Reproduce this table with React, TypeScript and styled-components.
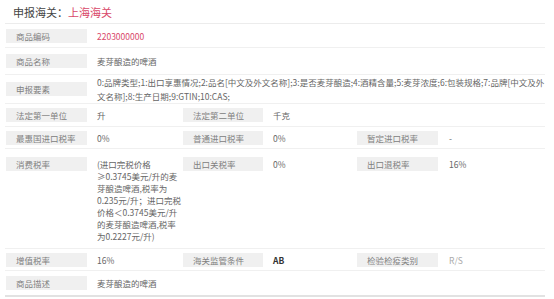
import styled, { createGlobalStyle } from "styled-components";

const GlobalStyle = createGlobalStyle`
  html, body {
    margin: 0;
    padding: 0;
    background: #fff;
  }
  body {
    font-family: "Noto Sans CJK SC", "Noto Sans", sans-serif;
  }
`;

type Cell = { label: string; value: string; strong?: boolean; faint?: boolean };

type RowData = {
  h: number;
  top?: boolean;
  cells: Cell[];
  pink?: boolean;
  lh?: number;
};

const ROWS: RowData[] = [
  { h: 24, pink: true, cells: [{ label: "商品编码", value: "2203000000" }] },
  { h: 27, cells: [{ label: "商品名称", value: "麦芽酿造的啤酒" }] },
  {
    h: 27,
    lh: 14,
    cells: [
      {
        label: "申报要素",
        value:
          "0:品牌类型;1:出口享惠情况;2:品名[中文及外文名称];3:是否麦芽酿造;4:酒精含量;5:麦芽浓度;6:包装规格;7:品牌[中文及外\n文名称];8:生产日期;9:GTIN;10:CAS;",
      },
    ],
  },
  {
    h: 23,
    cells: [
      { label: "法定第一单位", value: "升" },
      { label: "法定第二单位", value: "千克" },
    ],
  },
  {
    h: 22,
    cells: [
      { label: "最惠国进口税率", value: "0%" },
      { label: "普通进口税率", value: "0%" },
      { label: "暂定进口税率", value: "-" },
    ],
  },
  {
    h: 100,
    top: true,
    lh: 12,
    cells: [
      {
        label: "消费税率",
        value:
          "(进口完税价格\n≥0.3745美元/升的麦\n芽酿造啤酒,税率为\n0.235元/升；进口完税\n价格＜0.3745美元/升\n的麦芽酿造啤酒,税率\n为0.2227元/升)",
      },
      { label: "出口关税率", value: "0%" },
      { label: "出口退税率", value: "16%" },
    ],
  },
  {
    h: 22,
    cells: [
      { label: "增值税率", value: "16%" },
      { label: "海关监管条件", value: "AB", strong: true },
      { label: "检验检疫类别", value: "R/S", faint: true },
    ],
  },
  { h: 26, cells: [{ label: "商品描述", value: "麦芽酿造的啤酒" }] },
];

const App = () => {
  return (
    <>
      <GlobalStyle />
      <Wrapper>
        <Header>
          申报海关：<Port>上海海关</Port>
        </Header>
        <Table>
          {ROWS.map((row, i) => (
            <Row key={i} $h={row.h} $top={row.top} $last={i === ROWS.length - 1}>
              {row.cells.map((c, j) => (
                <Pair key={c.label}>
                  <Label $w={j === 1 ? 80 : 81}>{c.label}</Label>
                  <Value
                    $w={j === 0 && row.cells.length > 1 ? 96 : j === 1 ? 94 : undefined}
                    $pad={j === 2 ? 11 : 10}
                    $lh={row.lh}
                    $pink={row.pink}
                    $strong={c.strong}
                    $faint={c.faint}
                  >
                    {c.value}
                  </Value>
                </Pair>
              ))}
            </Row>
          ))}
        </Table>
      </Wrapper>
    </>
  );
};

const Wrapper = styled.div`
  width: 540px;
  margin-left: 5px;
  color: #666;
  font-size: 8.5px;
`;

const Header = styled.div`
  height: 24px;
  box-sizing: border-box;
  border-bottom: 1px solid #ececec;
  padding-left: 8px;
  padding-top: 5px;
  font-size: 11px;
  line-height: 15px;
  color: #444;
`;

const Port = styled.span`
  color: #d9486a;
`;

const Table = styled.div`
  display: flex;
  flex-direction: column;
`;

const Row = styled.div<{ $h: number; $top?: boolean; $last?: boolean }>`
  display: flex;
  align-items: ${(p) => (p.$top ? "flex-start" : "center")};
  min-height: ${(p) => p.$h}px;
  box-sizing: border-box;
  padding-left: 1px;
  padding-top: ${(p) => (p.$top ? 8 : 0)}px;
  border-bottom: ${(p) => (p.$last ? "2px solid #e2e2e2" : "1px solid #f0f0f0")};
`;

const Pair = styled.div`
  display: flex;
  align-items: inherit;
  &:last-child {
    flex: 1;
  }
`;

const Label = styled.div<{ $w: number }>`
  flex: 0 0 auto;
  width: ${(p) => p.$w}px;
  height: 14px;
  line-height: 14px;
  box-sizing: border-box;
  padding-left: 10px;
  background: #f0f0f0;
  color: #808080;
  white-space: nowrap;
`;

const Value = styled.div<{
  $w?: number;
  $pad: number;
  $lh?: number;
  $pink?: boolean;
  $strong?: boolean;
  $faint?: boolean;
}>`
  ${(p) => (p.$w ? `width: ${p.$w}px; flex: 0 0 auto;` : "flex: 1;")}
  box-sizing: border-box;
  padding-left: ${(p) => p.$pad}px;
  line-height: ${(p) => p.$lh ?? 14}px;
  margin-top: ${(p) => (p.$lh === 12 ? 1 : 0)}px;
  white-space: pre-line;
  color: ${(p) => (p.$pink ? "#d9486a" : p.$strong ? "#333" : p.$faint ? "#aaa" : "#666")};
  font-weight: ${(p) => (p.$strong ? 700 : 400)};
`;

export default App;
